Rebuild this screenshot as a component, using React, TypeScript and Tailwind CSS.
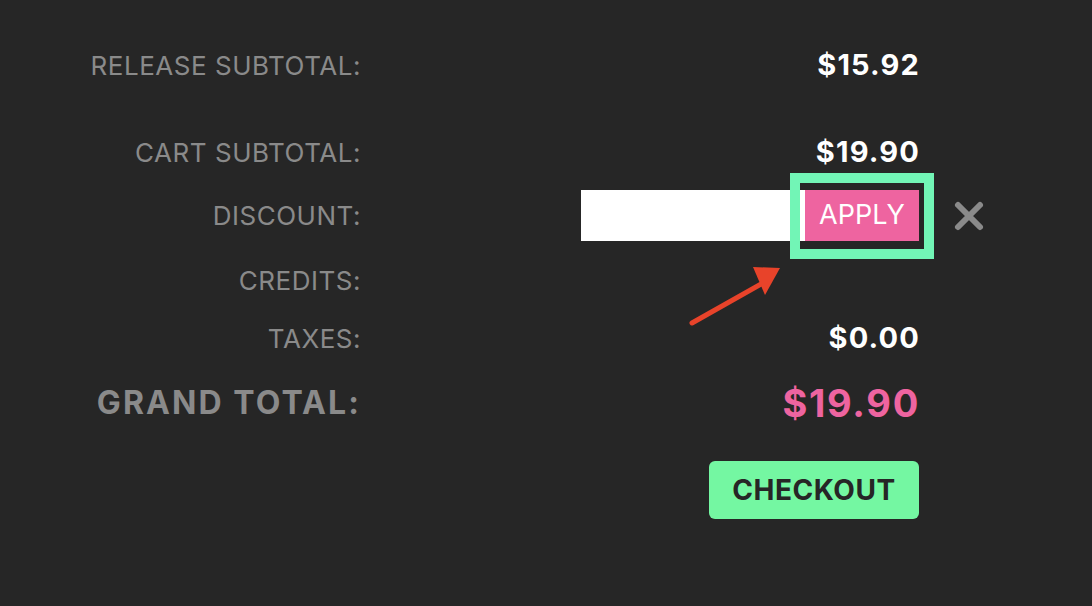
import React from "react";

function Row({ label, children, className = "", labelClass = "" }: { label: string; children?: React.ReactNode; className?: string; labelClass?: string }) {
  return (
    <div className={`flex items-center ${className}`}>
      <div className={`w-[361px] text-right ${labelClass}`}>{label}</div>
      <div className="flex-1 flex justify-end items-center">{children}</div>
    </div>
  );
}

export default function App() {
  return (
    <div className="w-[1092px] h-[606px] bg-[#262626] relative overflow-hidden" style={{ fontFamily: "Inter, 'Noto Sans', sans-serif" }}>
      <div className="w-[920px] pt-[39px] flex flex-col text-[26px] text-[#8a8a8a]">
        <Row label="RELEASE SUBTOTAL:" className="h-[52px]" labelClass="tracking-[0.02em]">
          <span className="text-white font-bold text-[29px] tracking-[0.04em]">$15.92</span>
        </Row>
        <Row label="CART SUBTOTAL:" className="h-[52px] mt-[35px]" labelClass="tracking-[0.02em]">
          <span className="text-white font-bold text-[29px] tracking-[0.04em]">$19.90</span>
        </Row>
        <Row label="DISCOUNT:" className="h-[51px] mt-[12px]" labelClass="tracking-[0.02em]">
          <div className="flex h-[51px] mr-[1px]">
            <div className="w-[224px] bg-white" />
            <button className="w-[114px] bg-[#ee64a0] text-white text-[27px] font-normal">APPLY</button>
          </div>
        </Row>
        <Row label="CREDITS:" className="h-[52px] mt-[13px]" labelClass="tracking-[0.02em]" />
        <Row label="TAXES:" className="h-[52px] mt-[6px]" labelClass="tracking-[0.02em]">
          <span className="text-white font-bold text-[29px] tracking-[0.04em]">$0.00</span>
        </Row>
        <Row label="GRAND TOTAL:" className="h-[52px] mt-[13px]" labelClass="font-bold text-[32px] tracking-[0.065em]">
          <span className="text-[#ee64a0] font-bold text-[38px] tracking-[0.045em]">$19.90</span>
        </Row>
        <div className="flex justify-end mt-[32px] mr-[1px]">
          <button className="w-[210px] h-[58px] rounded-[6px] bg-[#74f7a2] text-[#262626] font-bold text-[28px] tracking-[0.02em]">CHECKOUT</button>
        </div>
      </div>

      {/* remove icon */}
      <svg className="absolute left-[953px] top-[200px]" width="32" height="32" viewBox="0 0 32 32">
        <path d="M5 5 L27 27 M27 5 L5 27" stroke="#8a8a8a" strokeWidth="6" strokeLinecap="round" />
      </svg>

      {/* annotation box */}
      <div className="absolute left-[790px] top-[173px] w-[144px] h-[86px] border-[10px] border-[#72f5b6]" />

      {/* annotation arrow */}
      <svg className="absolute left-[680px] top-[260px]" width="110" height="80" viewBox="0 0 110 80">
        <line x1="12" y1="63" x2="88" y2="20" stroke="#e8432a" strokeWidth="5" strokeLinecap="round" />
        <polygon points="73,7 100,8 85,35" fill="#e8432a" />
      </svg>
    </div>
  );
}
